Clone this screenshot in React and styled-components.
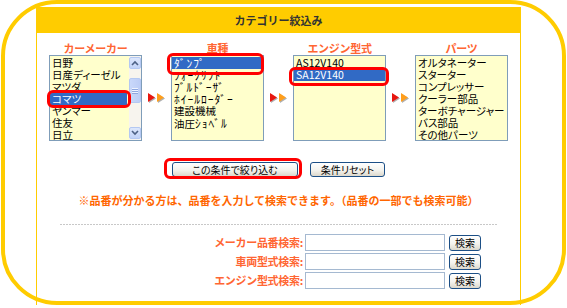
import React from "react";
import styled, { createGlobalStyle } from "styled-components";

const GlobalStyle = createGlobalStyle`
  html, body { margin: 0; padding: 0; background: #fff; overflow: hidden; }
  body { font-family: "Noto Sans CJK JP", "Noto Sans", sans-serif; }
  * { box-sizing: border-box; }
`;

const Frame = styled.div`
  width: 565px;
  height: 305px;
  margin-left: 1px;
  border: 4px solid #ffcc00;
  border-radius: 56px;
`;

const Panel = styled.div`
  position: relative;
  width: 485px;
  min-height: 312px;
  margin: 3px 0 0 31px;
  border-left: 1px solid #ffcc00;
  border-right: 1px solid #ffcc00;
`;

const Header = styled.div`
  height: 26px;
  background: #ffcc00;
  color: #333;
  font-size: 11px;
  font-weight: bold;
  line-height: 26px;
  text-align: center;
`;

const Columns = styled.div`
  display: flex;
  align-items: flex-end;
  padding: 8px 0 0 12px;
`;

const Column = styled.div`
  display: flex;
  flex-direction: column;
  align-items: center;
  width: 93px;
`;

const ColLabel = styled.div`
  height: 14px;
  line-height: 14px;
  font-size: 11px;
  font-weight: bold;
  color: #ff6633;
  letter-spacing: -0.3px;
`;

const ListWrap = styled.div`
  position: relative;
  width: 93px;
`;

const ListBox = styled.div`
  display: flex;
  width: 93px;
  height: 86px;
  border: 1px solid #7f9db9;
  background: #ffffcc;
  overflow: hidden;
`;

const Items = styled.ul`
  list-style: none;
  margin: 0;
  padding: 1px 0 0;
  flex: 1;
  min-width: 0;
`;

const Item = styled.li`
  height: 12px;
  line-height: 12px;
  font-size: 10.5px;
  padding-left: 2px;
  margin-right: ${(p) => (p.$scroll ? "2px" : "0")};
  white-space: nowrap;
  font-feature-settings: "palt";
  color: ${(p) => (p.$selected ? "#fff" : "#000")};
  background: ${(p) => (p.$selected ? "#316ac5" : "transparent")};
`;

const Hankaku = styled.span`
  font-size: 11.5px;
  letter-spacing: 1px;
`;

const ScrollBar = styled.div`
  width: 12px;
  display: flex;
  flex-direction: column;
  background: #f7f4ee;
  padding: 1px 0;
`;

const ScrollBtn = styled.div`
  height: 12px;
  border: 1px solid #b4c8f2;
  border-radius: 2px;
  background: linear-gradient(#dde7fc, #c2d3f8);
  display: flex;
  align-items: center;
  justify-content: center;
`;

const Track = styled.div`
  flex: 1;
  padding-top: 9px;
`;

const Thumb = styled.div`
  height: 25px;
  border: 1px solid #b4c8f2;
  border-radius: 2px;
  background: linear-gradient(90deg, #c9d8fa, #bccdf6);
  display: flex;
  flex-direction: column;
  align-items: center;
  justify-content: center;
  gap: 1px;
`;

const Grip = styled.div`
  width: 6px;
  height: 1px;
  background: #eef3ff;
  box-shadow: 0 1px 0 #8fa8e0;
`;

const Highlight = styled.div`
  position: absolute;
  top: ${(p) => p.$top}px;
  left: ${(p) => p.$left}px;
  width: ${(p) => p.$width}px;
  height: ${(p) => p.$height}px;
  border: 3px solid #ff0000;
  border-radius: 6px;
  pointer-events: none;
`;

const ArrowSlot = styled.div`
  width: 29px;
  height: 86px;
  display: flex;
  align-items: center;
  justify-content: center;
`;

const ButtonsRow = styled.div`
  display: flex;
  justify-content: center;
  gap: 12px;
  margin-top: 21px;
`;

const BtnWrap = styled.div`
  position: relative;
`;

const XPButton = styled.button`
  display: block;
  width: ${(p) => p.$w}px;
  height: ${(p) => p.$h || 15}px;
  padding: 0;
  border: 1px solid #1c4f86;
  border-radius: 3px;
  background: linear-gradient(#ffffff, #f4f3ee 55%, #dcd8cc);
  color: #000;
  font-family: "Noto Sans CJK JP", sans-serif;
  font-size: 10px;
  line-height: 13px;
  font-feature-settings: "palt";
`;

const Note = styled.div`
  margin-top: 16px;
  height: 14px;
  line-height: 14px;
  text-align: center;
  font-size: 11px;
  font-weight: bold;
  color: #ff6600;
`;

const Divider = styled.div`
  margin: 17px 22px 0 23px;
  height: 1px;
  background-image: linear-gradient(90deg, #c8c8c8 0 2px, transparent 2px 3px);
  background-size: 3px 1px;
`;

const SearchGrid = styled.div`
  display: grid;
  grid-template-columns: 100px 142px 36px;
  grid-auto-rows: 17px;
  row-gap: 2px;
  margin: 9px 0 0 166px;
`;

const SearchLabel = styled.div`
  text-align: right;
  line-height: 17px;
  font-size: 11px;
  font-weight: bold;
  color: #ff6633;
  white-space: nowrap;
  letter-spacing: -0.3px;
`;

const SearchInput = styled.input`
  margin-left: 2px;
  width: 140px;
  height: 17px;
  border: 1px solid #a5b9d1;
  background: #fff;
  padding: 0 2px;
`;

const SearchBtnCell = styled.div`
  padding-left: 4px;
  display: flex;
  align-items: center;
`;

const Arrows = () => (
  <svg width="18" height="10" viewBox="0 0 18 10">
    <polygon points="1,1 8,5.5 1,10" fill="#b0b0b0" />
    <polygon points="0,0 7,4.5 0,9" fill="#e8160f" />
    <polygon points="10,1 17,5.5 10,10" fill="#b0b0b0" />
    <polygon points="9,0 16,4.5 9,9" fill="#ff9e1b" />
  </svg>
);

const Chevron = ({ up }) => (
  <svg width="8" height="6" viewBox="0 0 8 6">
    <path
      d={up ? "M1 5 L4 2 L7 5" : "M1 1 L4 4 L7 1"}
      fill="none"
      stroke="#4d6185"
      strokeWidth="1.6"
    />
  </svg>
);

const makers = ["日野", "日産ディーゼル", "マツダ", "コマツ", "ヤンマー", "住友", "日立"];
const types = [
  { t: "ﾀﾞﾝﾌﾟ", h: true },
  { t: "ﾌｫｰｸﾘﾌﾄ", h: true },
  { t: "ﾌﾞﾙﾄﾞｰｻﾞ", h: true },
  { t: "ﾎｲｰﾙﾛｰﾀﾞｰ", h: true },
  { t: "建設機械" },
  { t: "油圧", rest: "ｼｮﾍﾞﾙ" },
];
const engines = ["AS12V140", "SA12V140"];
const parts = [
  "オルタネーター",
  "スターター",
  "コンプレッサー",
  "クーラー部品",
  "ターボチャージャー",
  "バス部品",
  "その他パーツ",
];

export default function App() {
  return (
    <>
      <GlobalStyle />
      <Frame>
        <Panel>
          <Header>カテゴリー絞込み</Header>
          <Columns>
            <Column>
              <ColLabel>カーメーカー</ColLabel>
              <ListWrap>
                <ListBox>
                  <Items>
                    {makers.map((m) => (
                      <Item key={m} $scroll $selected={m === "コマツ"}>
                        {m}
                      </Item>
                    ))}
                  </Items>
                  <ScrollBar>
                    <ScrollBtn>
                      <Chevron up />
                    </ScrollBtn>
                    <Track>
                      <Thumb>
                        <Grip />
                        <Grip />
                        <Grip />
                      </Thumb>
                    </Track>
                    <ScrollBtn>
                      <Chevron />
                    </ScrollBtn>
                  </ScrollBar>
                </ListBox>
                <Highlight $top={35} $left={-2} $width={84} $height={18} />
              </ListWrap>
            </Column>
            <ArrowSlot>
              <Arrows />
            </ArrowSlot>
            <Column>
              <ColLabel>車種</ColLabel>
              <ListWrap>
                <ListBox>
                  <Items>
                    {types.map((x, i) => (
                      <Item key={x.t} $selected={i === 0}>
                        {x.h ? <Hankaku>{x.t}</Hankaku> : x.t}
                        {x.rest && <Hankaku>{x.rest}</Hankaku>}
                      </Item>
                    ))}
                  </Items>
                </ListBox>
                <Highlight $top={-2} $left={-4} $width={97} $height={22} />
              </ListWrap>
            </Column>
            <ArrowSlot>
              <Arrows />
            </ArrowSlot>
            <Column>
              <ColLabel>エンジン型式</ColLabel>
              <ListWrap>
                <ListBox>
                  <Items>
                    {engines.map((e, i) => (
                      <Item key={e} $selected={i === 1}>
                        {e}
                      </Item>
                    ))}
                  </Items>
                </ListBox>
                <Highlight $top={12} $left={-4} $width={100} $height={19} />
              </ListWrap>
            </Column>
            <ArrowSlot>
              <Arrows />
            </ArrowSlot>
            <Column>
              <ColLabel>パーツ</ColLabel>
              <ListWrap>
                <ListBox>
                  <Items>
                    {parts.map((p) => (
                      <Item key={p}>{p}</Item>
                    ))}
                  </Items>
                </ListBox>
              </ListWrap>
            </Column>
          </Columns>
          <ButtonsRow>
            <BtnWrap>
              <XPButton $w={126}>この条件で絞り込む</XPButton>
              <Highlight $top={-4} $left={-8} $width={138} $height={21} />
            </BtnWrap>
            <XPButton $w={75}>条件リセット</XPButton>
          </ButtonsRow>
          <Note>※品番が分かる方は、品番を入力して検索できます。（品番の一部でも検索可能）</Note>
          <Divider />
          <SearchGrid>
            <SearchLabel>メーカー品番検索:</SearchLabel>
            <SearchInput type="text" />
            <SearchBtnCell>
              <XPButton $w={32} $h={16}>検索</XPButton>
            </SearchBtnCell>
            <SearchLabel>車両型式検索:</SearchLabel>
            <SearchInput type="text" />
            <SearchBtnCell>
              <XPButton $w={32} $h={16}>検索</XPButton>
            </SearchBtnCell>
            <SearchLabel>エンジン型式検索:</SearchLabel>
            <SearchInput type="text" />
            <SearchBtnCell>
              <XPButton $w={32} $h={16}>検索</XPButton>
            </SearchBtnCell>
          </SearchGrid>
        </Panel>
      </Frame>
    </>
  );
}
